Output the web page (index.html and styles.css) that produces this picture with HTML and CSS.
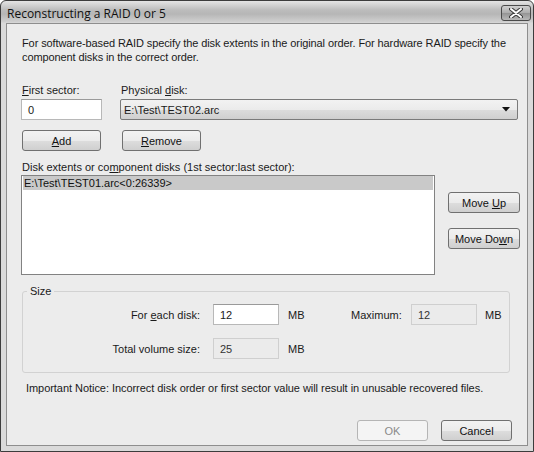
FILE: index.html
```html
<!DOCTYPE html>
<html lang="en">
<head>
   <meta charset="UTF-8">
   <title>Reconstructing a RAID 0 or 5</title>
   <link rel="stylesheet" href="styles.css">
</head>
<body>

   <div class="window">
       <div class="titlebar">
           <span class="title">Reconstructing a RAID 0 or 5</span>
           <div class="close-btn">
               <svg width="14" height="10" viewBox="0 0 14 10">
                   <path d="M2 1 L12 9 M12 1 L2 9" stroke="#3a3a3a" stroke-width="4" stroke-linecap="round"/>
                   <path d="M2 1 L12 9 M12 1 L2 9" stroke="#ffffff" stroke-width="2" stroke-linecap="round"/>
               </svg>
           </div>
       </div>

       <div class="content">
           <p class="intro">For software-based RAID specify the disk extents in the original order. For hardware RAID specify the component disks in the correct order.</p>

           <div class="source-row">
               <div class="field-col sector-col">
                   <label><u>F</u>irst sector:</label>
                   <div class="textbox">0</div>
               </div>
               <div class="field-col disk-col">
                   <label>Physical <u>d</u>isk:</label>
                   <div class="combo">
                       <span>E:\Test\TEST02.arc</span>
                       <svg width="8" height="5" viewBox="0 0 8 5"><path d="M0 0 H8 L4 4.5 Z" fill="#111"/></svg>
                   </div>
               </div>
           </div>

           <div class="button-row">
               <button class="btn btn-add"><u>A</u>dd</button>
               <button class="btn btn-remove"><u>R</u>emove</button>
           </div>

           <label class="list-label">Disk extents or co<u>m</u>ponent disks (1st sector:last sector):</label>
           <div class="list-row">
               <div class="listbox">
                   <div class="list-item selected">E:\Test\TEST01.arc&lt;0:26339&gt;</div>
               </div>
               <div class="move-buttons">
                   <button class="btn btn-move">Move <u>U</u>p</button>
                   <button class="btn btn-move">Move Do<u>w</u>n</button>
               </div>
           </div>

           <fieldset class="size-group">
               <legend>Size</legend>
               <div class="size-row">
                   <span class="size-label">For <u>e</u>ach disk:</span>
                   <div class="textbox size-box">12</div>
                   <span class="unit">MB</span>
                   <span class="max-label">Maximum:</span>
                   <div class="textbox size-box disabled">12</div>
                   <span class="unit unit-last">MB</span>
               </div>
               <div class="size-row">
                   <span class="size-label">Total volume size:</span>
                   <div class="textbox size-box disabled">25</div>
                   <span class="unit">MB</span>
               </div>
           </fieldset>

           <p class="notice">Important Notice: Incorrect disk order or first sector value will result in unusable recovered files.</p>

           <div class="footer">
               <button class="btn btn-dialog" disabled>OK</button>
               <button class="btn btn-dialog">Cancel</button>
           </div>
       </div>
   </div>

</body>
</html>
```

FILE: styles.css
```css
* {
    box-sizing: border-box;
}
body {
    margin: 0;
    background-color: #ffffff;
    font-family: "Liberation Sans", Arial, sans-serif;
    font-size: 11px;
    color: #1a1a1a;
}
u {
    text-decoration: underline;
    text-underline-offset: 1px;
}

/* marco de la ventana */
.window {
    width: 534px;
    height: 452px;
    border: 1px solid #3c3c3c;
    border-radius: 6px 6px 0 0;
    background: linear-gradient(to bottom, #e4e4e4 0, #bcbcbc 9px, #b6b6b6 13px, #d0d0d0 21px, #dadada 22px, #dadada 100%);
    padding: 0 5px 5px 5px;
    display: flex;
    flex-direction: column;
}
.titlebar {
    height: 22px;
    margin: 0 -3px 0 -5px;
    padding-left: 6px;
    display: flex;
    justify-content: space-between;
    align-items: flex-start;
}
.title {
    font-family: "Open Sans", "Noto Sans", sans-serif;
    font-size: 12px;
    line-height: 16px;
    margin-top: 5px;
    color: #111;
}
.close-btn {
    width: 30px;
    height: 16px;
    margin-top: 4px;
    border: 1px solid #4a4a4a;
    border-radius: 3px;
    background: linear-gradient(to bottom, #d0d0d0 0, #acacac 50%, #949494 51%, #b8b8b8 100%);
    display: flex;
    align-items: center;
    justify-content: center;
}

/* area de contenido */
.content {
    flex: 1;
    background-color: #ececec;
    border: 1px solid #8e8e8e;
    padding: 12px 0 0 14px;
    display: flex;
    flex-direction: column;
}
.intro {
    margin: 0;
    line-height: 14px;
    padding-left: 1px;
    letter-spacing: -0.1px;
}
label, .size-label, .max-label, .unit {
    line-height: 14px;
}
.source-row {
    display: flex;
    margin-top: 19px;
}
.field-col {
    display: flex;
    flex-direction: column;
    gap: 2px;
    flex-shrink: 0;
}
.field-col label {
    padding-left: 1px;
}
.sector-col {
    width: 81px;
}
.disk-col {
    width: 398px;
    margin-left: 18px;
}
.textbox {
    height: 21px;
    background-color: #ffffff;
    border: 1px solid #b8b8b8;
    border-top-color: #9a9a9a;
    padding: 3px 5px 0 6px;
    line-height: 14px;
}
.textbox.disabled {
    background-color: #ebebeb;
    border-color: #cfcfcf;
    color: #333;
}
.combo {
    height: 21px;
    border: 1px solid #7a7a7a;
    border-radius: 2px;
    background: linear-gradient(to bottom, #f2f2f2 0, #ebebeb 50%, #dcdcdc 51%, #cfcfcf 100%);
    padding: 0 7px 0 3px;
    display: flex;
    align-items: center;
    justify-content: space-between;
}

/* botones estilo vista */
.btn {
    font-family: inherit;
    font-size: 11px;
    color: #111;
    height: 21px;
    padding: 0;
    border: 1px solid #707070;
    border-radius: 3px;
    background: linear-gradient(to bottom, #f2f2f2 0, #ebebeb 50%, #dddddd 51%, #cfcfcf 100%);
    flex-shrink: 0;
}
.btn:disabled {
    border-color: #b5b5b5;
    background: #f4f4f4;
    color: #8a8a8a;
}
.button-row {
    display: flex;
    margin-top: 10px;
    padding-left: 1px;
}
.btn-add, .btn-remove {
    width: 79px;
}
.btn-remove {
    margin-left: 21px;
}
.list-label {
    margin-top: 9px;
    padding-left: 1px;
}
.list-row {
    display: flex;
    margin-top: 1px;
}
.listbox {
    width: 414px;
    height: 100px;
    flex-shrink: 0;
    background-color: #ffffff;
    border: 1px solid #828282;
    padding: 0 1px;
}
.list-item {
    height: 14px;
    line-height: 14px;
    padding-left: 1px;
    color: #111;
}
.list-item.selected {
    background-color: #c9c9c9;
}
.move-buttons {
    display: flex;
    flex-direction: column;
    gap: 15px;
    margin-left: 13px;
    margin-top: 17px;
}
.btn-move {
    width: 72px;
}

/* grupo de tamaño */
.size-group {
    margin: 9px 0 0 1px;
    width: 488px;
    border: 1px solid #d2d2d2;
    border-radius: 3px;
    padding: 6px 0 13px 0;
    min-width: 0;
}
.size-group legend {
    padding: 0 3px;
    margin-left: 4px;
    line-height: 14px;
}
.size-row {
    display: flex;
    align-items: center;
}
.size-row + .size-row {
    margin-top: 13px;
}
.size-label {
    width: 177px;
    text-align: right;
}
.size-box {
    width: 66px;
    margin-left: 13px;
}
.unit {
    margin-left: 9px;
    width: 63px;
}
.max-label {
    width: 47px;
}
.unit-last {
    margin-left: 8px;
    width: auto;
}
.notice {
    margin: 8px 0 0 5px;
    line-height: 14px;
    letter-spacing: -0.05px;
}
.footer {
    display: flex;
    justify-content: flex-end;
    gap: 13px;
    margin-top: 25px;
    padding-right: 15px;
}
.btn-dialog {
    width: 71px;
}
```
